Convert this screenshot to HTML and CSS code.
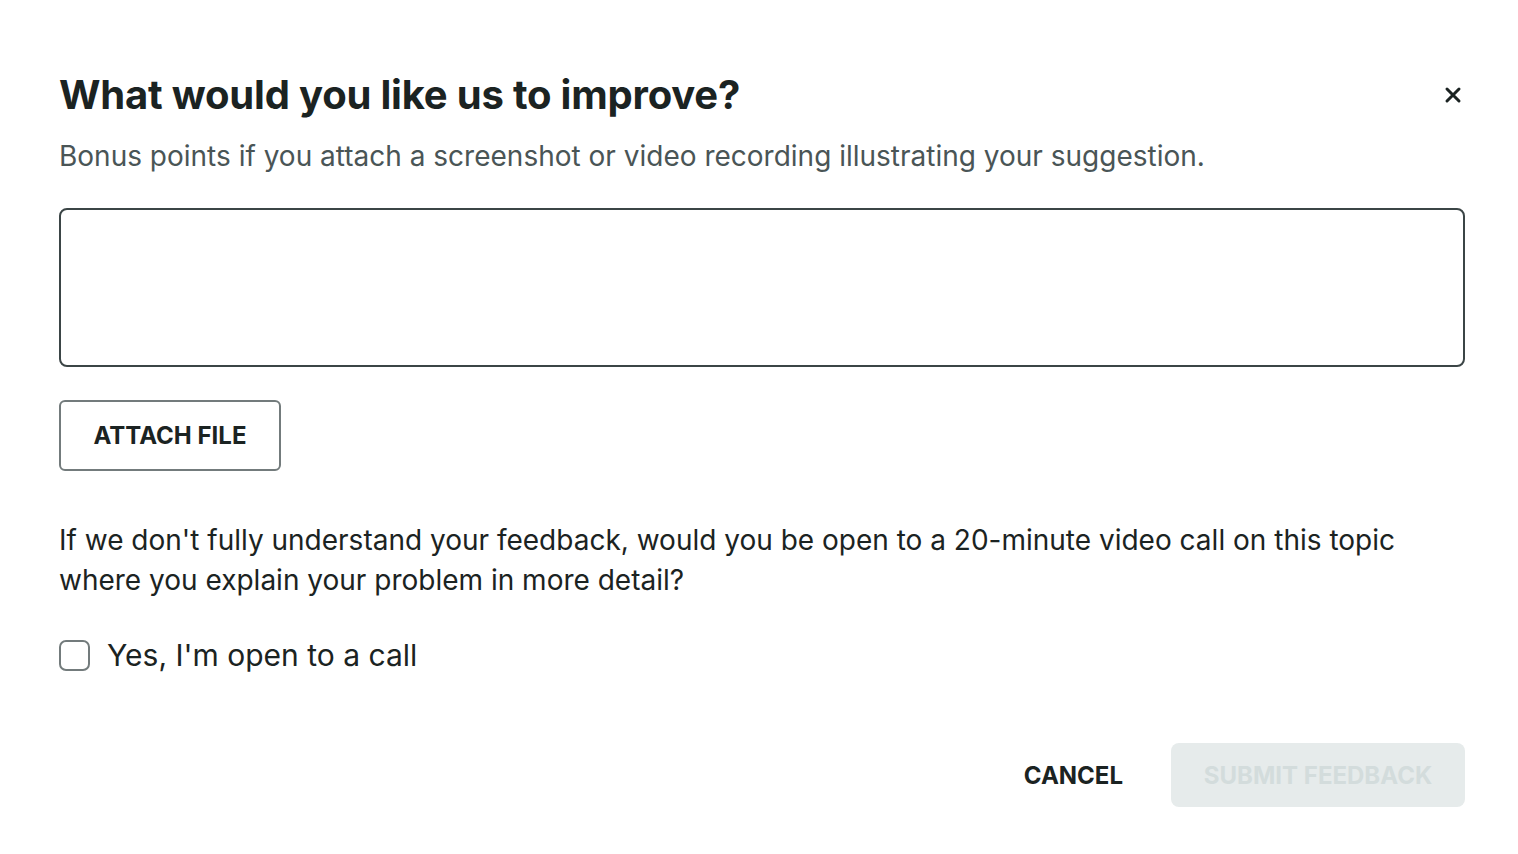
FILE: index.html
```html
<!DOCTYPE html>
<html>
<head>
<meta charset="utf-8">
<link rel="stylesheet" href="styles.css">
</head>
<body>
<div class="dialog">
  <div class="header">
    <h1 class="title">What would you like us to improve?</h1>
    <button class="close" aria-label="Close">
      <svg width="18" height="18" viewBox="0 0 18 18"><path d="M3 3 L15 15 M15 3 L3 15" stroke="#1b2322" stroke-width="3" stroke-linecap="round"/></svg>
    </button>
  </div>
  <p class="subtitle">Bonus points if you attach a screenshot or video recording illustrating your suggestion.</p>
  <textarea class="input"></textarea>
  <div class="attach-row"><button class="btn-outline">ATTACH FILE</button></div>
  <p class="question">If we don't fully understand your feedback, would you be open to a 20-minute video call on this topic where you explain your problem in more detail?</p>
  <label class="check-row"><span class="checkbox"></span><span class="check-label">Yes, I'm open to a call</span></label>
  <div class="footer">
    <button class="btn-text">CANCEL</button>
    <button class="btn-disabled">SUBMIT FEEDBACK</button>
  </div>
</div>
</body>
</html>
```
FILE: styles.css
```css
html, body { margin: 0; padding: 0; background: #fff; }
body { font-family: Inter, "Noto Sans", sans-serif; color: #1b2322; }
.dialog { padding: 65px 53px 0 59px; display: flex; flex-direction: column; }
.header { display: flex; justify-content: space-between; align-items: center; }
.title { margin: 0; font-size: 40px; font-weight: 700; line-height: 60px; letter-spacing: -0.2px; color: #1b2322; }
.close { background: none; border: 0; padding: 0; width: 18px; height: 18px; display: flex; margin-right: 3px; }
.subtitle { margin: 0; margin-top: 11px; font-size: 28px; line-height: 40px; letter-spacing: 0; color: #4a5556; }
.input { margin-top: 32px; height: 159px; box-sizing: border-box; border: 2px solid #3b4546; border-radius: 8px; resize: none; font: inherit; width: 100%; }
.attach-row { margin-top: 33px; display: flex; }
.btn-outline { height: 71px; width: 222px; box-sizing: border-box; border: 2px solid #737b7c; border-radius: 6px; background: #fff; font-family: Inter, sans-serif; font-weight: 700; font-size: 24px; color: #1b2322; letter-spacing: 0; }
.question { margin: 0; margin-top: 49px; font-size: 28px; line-height: 40px; letter-spacing: 0; color: #1b2322; }
.check-row { margin-top: 35px; display: flex; align-items: center; gap: 17px; }
.checkbox { width: 27px; height: 27px; border: 2px solid #737b7c; border-radius: 7px; }
.check-label { font-size: 30px; line-height: 40px; color: #1b2322; }
.footer { margin-top: 68px; display: flex; justify-content: flex-end; align-items: center; gap: 48px; }
.btn-text { background: none; border: 0; padding: 0; font-family: Inter, sans-serif; font-weight: 700; font-size: 24px; color: #1b2322; letter-spacing: 0; }
.btn-disabled { height: 64px; width: 294px; border: 0; border-radius: 8px; background: #e6ebeb; font-family: Inter, sans-serif; font-weight: 700; font-size: 24px; color: #d3dcdc; letter-spacing: 0; }
```
